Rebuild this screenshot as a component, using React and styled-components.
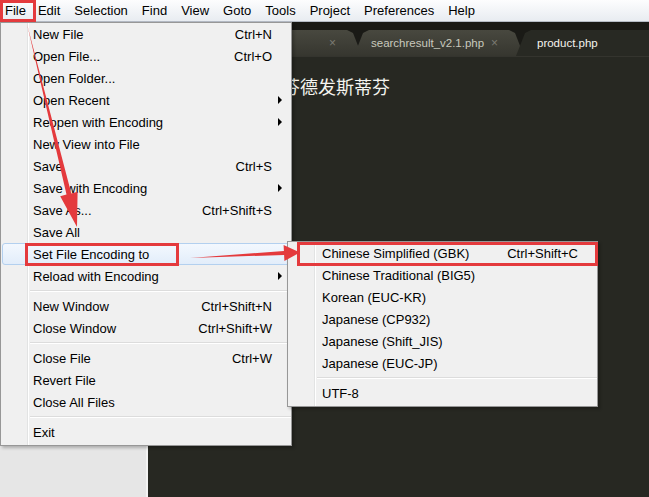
import React from "react";
import styled, { createGlobalStyle } from "styled-components";

const GlobalStyle = createGlobalStyle`
  html, body {
    margin: 0;
    padding: 0;
    overflow: hidden;
  }
  body {
    font-family: "Liberation Sans", Arial, sans-serif;
    font-size: 13px;
    color: #000;
  }
`;

const fileMenu = [
  { label: "New File", keys: "Ctrl+N" },
  { label: "Open File...", keys: "Ctrl+O" },
  { label: "Open Folder..." },
  { label: "Open Recent", sub: true },
  { label: "Reopen with Encoding", sub: true },
  { label: "New View into File" },
  { label: "Save", keys: "Ctrl+S" },
  { label: "Save with Encoding", sub: true },
  { label: "Save As...", keys: "Ctrl+Shift+S" },
  { label: "Save All" },
  { label: "Set File Encoding to", active: true },
  { label: "Reload with Encoding", sub: true },
  "sep",
  { label: "New Window", keys: "Ctrl+Shift+N" },
  { label: "Close Window", keys: "Ctrl+Shift+W" },
  "sep",
  { label: "Close File", keys: "Ctrl+W" },
  { label: "Revert File" },
  { label: "Close All Files" },
  "sep",
  { label: "Exit" },
];

const encodingMenu = [
  { label: "Chinese Simplified (GBK)", keys: "Ctrl+Shift+C" },
  { label: "Chinese Traditional (BIG5)" },
  { label: "Korean (EUC-KR)" },
  { label: "Japanese (CP932)" },
  { label: "Japanese (Shift_JIS)" },
  { label: "Japanese (EUC-JP)" },
  "sep",
  { label: "UTF-8" },
];

const topMenu = ["File", "Edit", "Selection", "Find", "View", "Goto", "Tools", "Project", "Preferences", "Help"];

// tabs: the first one is mostly covered by the open menu
const tabs = [
  { name: "", width: 172, closable: true },
  { name: "searchresult_v2.1.php", width: 170, closable: true },
  { name: "product.php", width: 150, active: true },
];

const App = () => {
  return (
    <>
      <GlobalStyle />
      <Window>
        <MenuBar>
          {topMenu.map((m) => (
            <MenuBarItem key={m}>{m}</MenuBarItem>
          ))}
        </MenuBar>
        <Body>
          <Sidebar />
          <Editor>
            <TabBar>
              {tabs.map((t, i) => (
                <Tab key={i} $width={t.width} $active={t.active}>
                  <TabName $active={t.active}>{t.name}</TabName>
                  {t.closable && <TabClose>×</TabClose>}
                </Tab>
              ))}
            </TabBar>
            <Code>
              <CodeLine>斯蒂芬德发斯蒂芬</CodeLine>
            </Code>
          </Editor>
        </Body>

        <Menu $left={0} $top={22} $width={292}>
          {fileMenu.map((item, i) =>
            item === "sep" ? (
              <Separator key={i} />
            ) : (
              <MenuItem key={i} $active={item.active}>
                <ItemLabel>{item.label}</ItemLabel>
                {item.keys && <ItemKeys>{item.keys}</ItemKeys>}
                <ArrowCell>{item.sub && <Caret />}</ArrowCell>
              </MenuItem>
            )
          )}
        </Menu>

        <Menu $left={287} $top={241} $width={311}>
          {encodingMenu.map((item, i) =>
            item === "sep" ? (
              <Separator key={i} />
            ) : (
              <MenuItem key={i} $pad={33}>
                <ItemLabel>{item.label}</ItemLabel>
                {item.keys && <ItemKeys>{item.keys}</ItemKeys>}
                <ArrowCell />
              </MenuItem>
            )
          )}
        </Menu>

        <Annotations width="649" height="497" viewBox="0 0 649 497">
          <rect x="1.5" y="1.5" width="33" height="19" fill="none" stroke="#e43a3d" strokeWidth="3" />
          <rect x="26.5" y="244.5" width="151" height="20" fill="none" stroke="#e43a3d" strokeWidth="3" />
          <rect x="298.5" y="243.5" width="298" height="21" fill="none" stroke="#e43a3d" strokeWidth="3" />
          <polygon
            points="27,24 71.3,193.4 77.6,191.8 77,227 60.2,196.2 66.5,194.6"
            fill="#e43a3d"
          />
          <polygon
            points="190,258 283.9,250.9 283.6,244.9 300,252.5 284.4,260.9 284.1,254.9"
            fill="#e43a3d"
          />
        </Annotations>
      </Window>
    </>
  );
};

const Window = styled.div`
  position: relative;
  width: 649px;
  height: 497px;
  display: flex;
  flex-direction: column;
  overflow: hidden;
`;

const MenuBar = styled.div`
  display: flex;
  align-items: center;
  height: 21px;
  background: linear-gradient(#fdfdfe, #e8ecf1);
  border-bottom: 1px solid #b6bcc6;
`;

const MenuBarItem = styled.div`
  padding: 0 7px;
  line-height: 21px;
  &:first-child {
    padding-left: 5px;
    padding-right: 5px;
  }
`;

const Body = styled.div`
  flex: 1;
  display: flex;
  min-height: 0;
`;

const Sidebar = styled.div`
  flex: 0 0 146px;
  background: #e6e6e6;
  border-right: 2px solid #f3f3f3;
`;

const Editor = styled.div`
  flex: 1;
  min-width: 0;
  display: flex;
  flex-direction: column;
  background: #272822;
  overflow: hidden;
`;

const TabBar = styled.div`
  display: flex;
  align-items: flex-end;
  height: 34px;
  padding-left: 42px;
  background: #1a1a16;
  border-bottom: 1px solid #34342e;
`;

const Tab = styled.div`
  position: relative;
  z-index: ${(p) => (p.$active ? 2 : 1)};
  flex: 0 0 ${(p) => p.$width}px;
  height: 26px;
  margin-left: -8px;
  display: flex;
  align-items: center;
  padding: 0 0 0 17px;
  box-sizing: border-box;
  background: ${(p) => (p.$active ? "#282923" : "linear-gradient(#48483f, #36362f)")};
  clip-path: polygon(0 100%, 9px 3px, 15px 0, calc(100% - 15px) 0, calc(100% - 9px) 3px, 100% 100%);
  &:first-child {
    margin-left: 0;
  }
`;

const TabName = styled.span`
  font-family: "Liberation Sans", Arial, sans-serif;
  font-size: 11.5px;
  white-space: nowrap;
  color: ${(p) => (p.$active ? "#f4f4ee" : "#c9c9bd")};
  padding-left: ${(p) => (p.$active ? "4px" : "0")};
`;

const TabClose = styled.span`
  margin-left: auto;
  margin-right: 26px;
  color: #7b7b72;
  font-size: 12px;
`;

const Code = styled.div`
  padding: 17px 0 0 98px;
`;

const CodeLine = styled.div`
  font-family: "Noto Sans CJK SC", sans-serif;
  font-size: 18px;
  line-height: 24px;
  color: #f3f3ee;
  white-space: nowrap;
`;

const Menu = styled.div`
  position: absolute;
  z-index: 5;
  left: ${(p) => p.$left}px;
  top: ${(p) => p.$top}px;
  width: ${(p) => p.$width}px;
  box-sizing: border-box;
  padding: 0 0 2px;
  border: 1px solid #979797;
  background: linear-gradient(
      to right,
      transparent 26px,
      #e2e3e3 26px,
      #e2e3e3 27px,
      #ffffff 27px,
      #ffffff 28px,
      transparent 28px
    ),
    #f0f0f0;
  box-shadow: 2px 2px 3px rgba(0, 0, 0, 0.25);
`;

const MenuItem = styled.div`
  display: flex;
  align-items: center;
  height: 22px;
  margin: 0 1px;
  padding-left: ${(p) => p.$pad || 31}px;
  box-sizing: border-box;
  border: 1px solid ${(p) => (p.$active ? "#b3d0ef" : "transparent")};
  border-radius: 3px;
  background: ${(p) => (p.$active ? "linear-gradient(#f3f8fe, #e2edfa)" : "transparent")};
`;

const ItemLabel = styled.span`
  flex: 1;
  white-space: nowrap;
  margin-left: -1px;
`;

const ItemKeys = styled.span`
  white-space: nowrap;
`;

const ArrowCell = styled.span`
  width: 17px;
  display: flex;
  align-items: center;
`;

const Caret = styled.span`
  width: 0;
  height: 0;
  margin-left: 6px;
  border-left: 4px solid #000;
  border-top: 4px solid transparent;
  border-bottom: 4px solid transparent;
`;

const Separator = styled.div`
  height: 8px;
  margin-left: 29px;
  background: linear-gradient(transparent 3px, #dcdcdc 3px, #dcdcdc 4px, #ffffff 4px, #ffffff 5px, transparent 5px);
`;

const Annotations = styled.svg`
  position: absolute;
  left: 0;
  top: 0;
  z-index: 10;
  pointer-events: none;
`;

export default App;
